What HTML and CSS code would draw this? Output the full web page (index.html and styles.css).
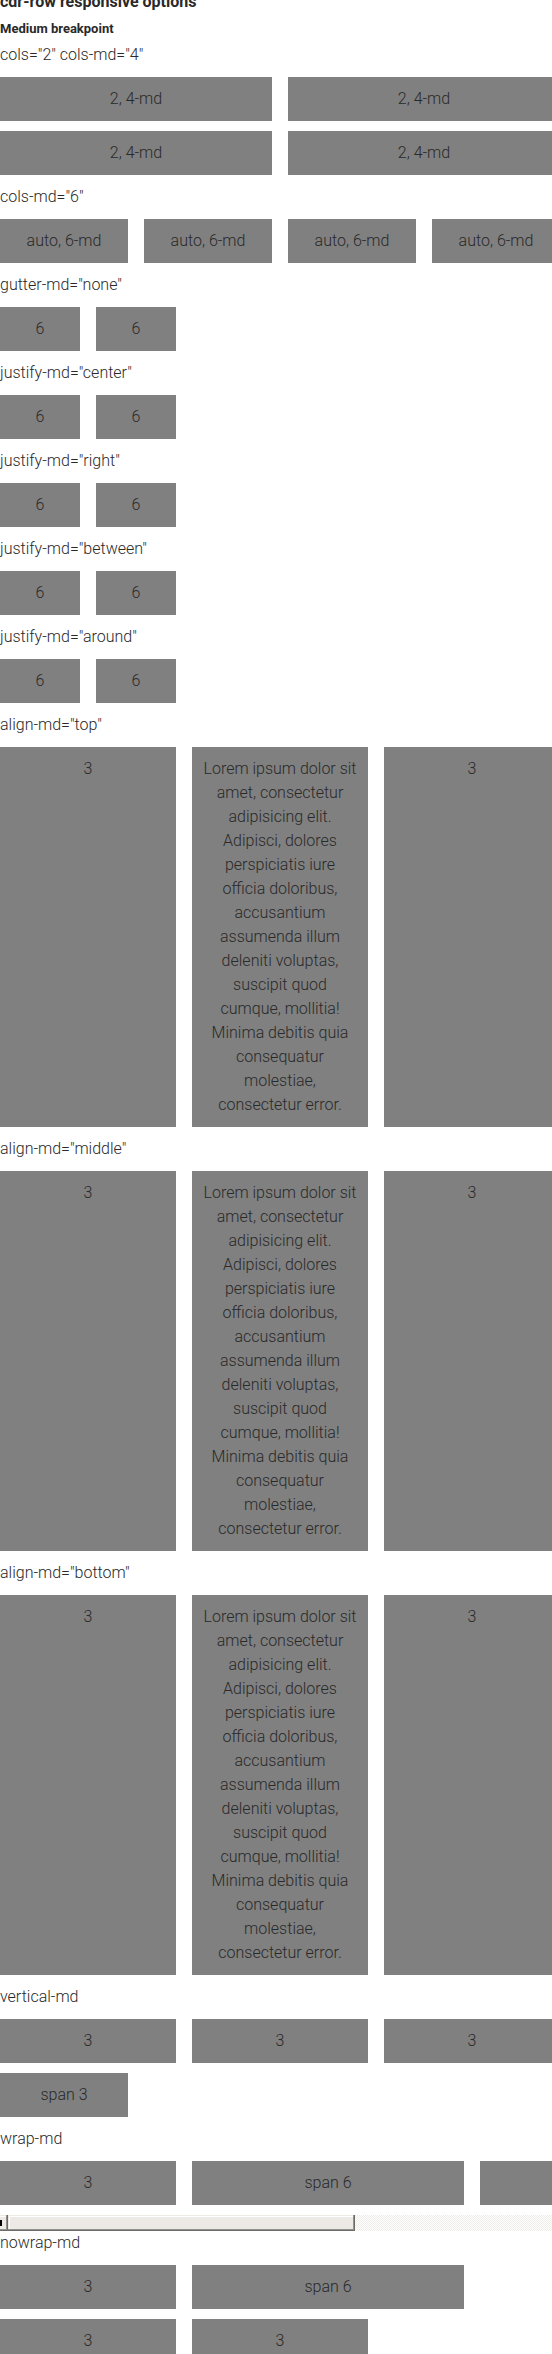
FILE: index.html
```
<!DOCTYPE html>
<html lang="en">
<head>
<meta charset="utf-8">
<meta name="viewport" content="width=device-width, initial-scale=1">
<title>cdr-row responsive options</title>
<link rel="stylesheet" href="styles.css">
</head>
<body>
<main class="page">
  <h2 class="title">cdr-row responsive options</h2>
  <h3 class="subtitle">Medium breakpoint</h3>

  <p class="label">cols="2" cols-md="4"</p>
  <div class="row"><div class="col span-6">2, 4-md</div><div class="col span-6">2, 4-md</div><div class="col span-6">2, 4-md</div><div class="col span-6">2, 4-md</div></div>

  <p class="label">cols-md="6"</p>
  <div class="row"><div class="col span-3">auto, 6-md</div><div class="col span-3">auto, 6-md</div><div class="col span-3">auto, 6-md</div><div class="col span-3">auto, 6-md</div></div>

  <p class="label">gutter-md="none"</p>
  <div class="row"><div class="col span-2">6</div><div class="col span-2">6</div></div>

  <p class="label">justify-md="center"</p>
  <div class="row"><div class="col span-2">6</div><div class="col span-2">6</div></div>

  <p class="label">justify-md="right"</p>
  <div class="row"><div class="col span-2">6</div><div class="col span-2">6</div></div>

  <p class="label">justify-md="between"</p>
  <div class="row"><div class="col span-2">6</div><div class="col span-2">6</div></div>

  <p class="label">justify-md="around"</p>
  <div class="row"><div class="col span-2">6</div><div class="col span-2">6</div></div>

  <p class="label">align-md="top"</p>
  <div class="row"><div class="col span-4">3</div><div class="col span-4">Lorem ipsum dolor sit amet, consectetur adipisicing elit. Adipisci, dolores perspiciatis iure officia doloribus, accusantium assumenda illum deleniti voluptas, suscipit quod cumque, mollitia! Minima debitis quia consequatur molestiae, consectetur error.</div><div class="col span-4">3</div></div>

  <p class="label">align-md="middle"</p>
  <div class="row"><div class="col span-4">3</div><div class="col span-4">Lorem ipsum dolor sit amet, consectetur adipisicing elit. Adipisci, dolores perspiciatis iure officia doloribus, accusantium assumenda illum deleniti voluptas, suscipit quod cumque, mollitia! Minima debitis quia consequatur molestiae, consectetur error.</div><div class="col span-4">3</div></div>

  <p class="label">align-md="bottom"</p>
  <div class="row"><div class="col span-4">3</div><div class="col span-4">Lorem ipsum dolor sit amet, consectetur adipisicing elit. Adipisci, dolores perspiciatis iure officia doloribus, accusantium assumenda illum deleniti voluptas, suscipit quod cumque, mollitia! Minima debitis quia consequatur molestiae, consectetur error.</div><div class="col span-4">3</div></div>

  <p class="label">vertical-md</p>
  <div class="row"><div class="col span-4">3</div><div class="col span-4">3</div><div class="col span-4">3</div><div class="col span-3">span 3</div></div>

  <p class="label">wrap-md</p>
  <div class="row"><div class="col span-4">3</div><div class="col span-6">span 6</div><div class="col span-2"></div></div>
  <div class="scrollbar" aria-hidden="true"><span class="scroll-button"><svg class="scroll-arrow" viewBox="0 0 2 6"><path d="M0 0H2V6H0z"/></svg></span><span class="scroll-thumb"></span></div>

  <p class="label">nowrap-md</p>
  <div class="row"><div class="col span-4">3</div><div class="col span-6">span 6</div><div class="col span-4 first">3</div><div class="col span-4">3</div></div>
</main>
</body>
</html>
```
FILE: styles.css
```
* { box-sizing: border-box; }

html { overflow: hidden; }

body {
  margin: 0;
  background: #fff;
  color: #292929;
  font-family: Roboto, "Liberation Sans", sans-serif;
  font-size: 16px;
  font-weight: 300;
  line-height: 24px;
}

/* The grid runs past the right edge by half a gutter. */
.page {
  margin-top: -10px;
  margin-right: -8px;
}

.title,
.subtitle,
.label { margin: 0; }

.title {
  font-size: 16px;
  font-weight: 700;
  line-height: 24px;
}

.subtitle {
  padding: 5px 0;
  font-size: 13px;
  font-weight: 700;
  line-height: 19px;
}

.row {
  display: grid;
  grid-template-columns: repeat(12, minmax(0, 1fr));
  gap: 10px 16px;
  padding: 10px 0;
}

.col {
  min-height: 44px;
  padding: 10px;
  background: #808080;
  text-align: center;
}

.span-2 { grid-column: span 2; }
.span-3 { grid-column: span 3; }
.span-4 { grid-column: span 4; }
.span-6 { grid-column: span 6; }
.first { grid-column: 1 / span 4; }

.scrollbar {
  display: flex;
  height: 16px;
  background: repeating-conic-gradient(#efede9 0 25%, #fff 0 50%) 0 0 / 2px 2px;
}

.scroll-button,
.scroll-thumb {
  border-right: 1px solid #6e6c69;
  border-bottom: 1px solid #6e6c69;
  background: #edeae5;
  box-shadow: inset -1px -1px #94928e, inset 0 1px #edeae5, inset 0 2px #fff;
}

.scroll-button {
  display: flex;
  align-items: center;
  width: 8px;
}

.scroll-thumb {
  width: 62%;
  box-shadow: inset -1px -1px #94928e, inset 1px 1px #edeae5, inset 2px 2px #fff;
}

.scroll-arrow {
  width: 2px;
  height: 6px;
}
```
